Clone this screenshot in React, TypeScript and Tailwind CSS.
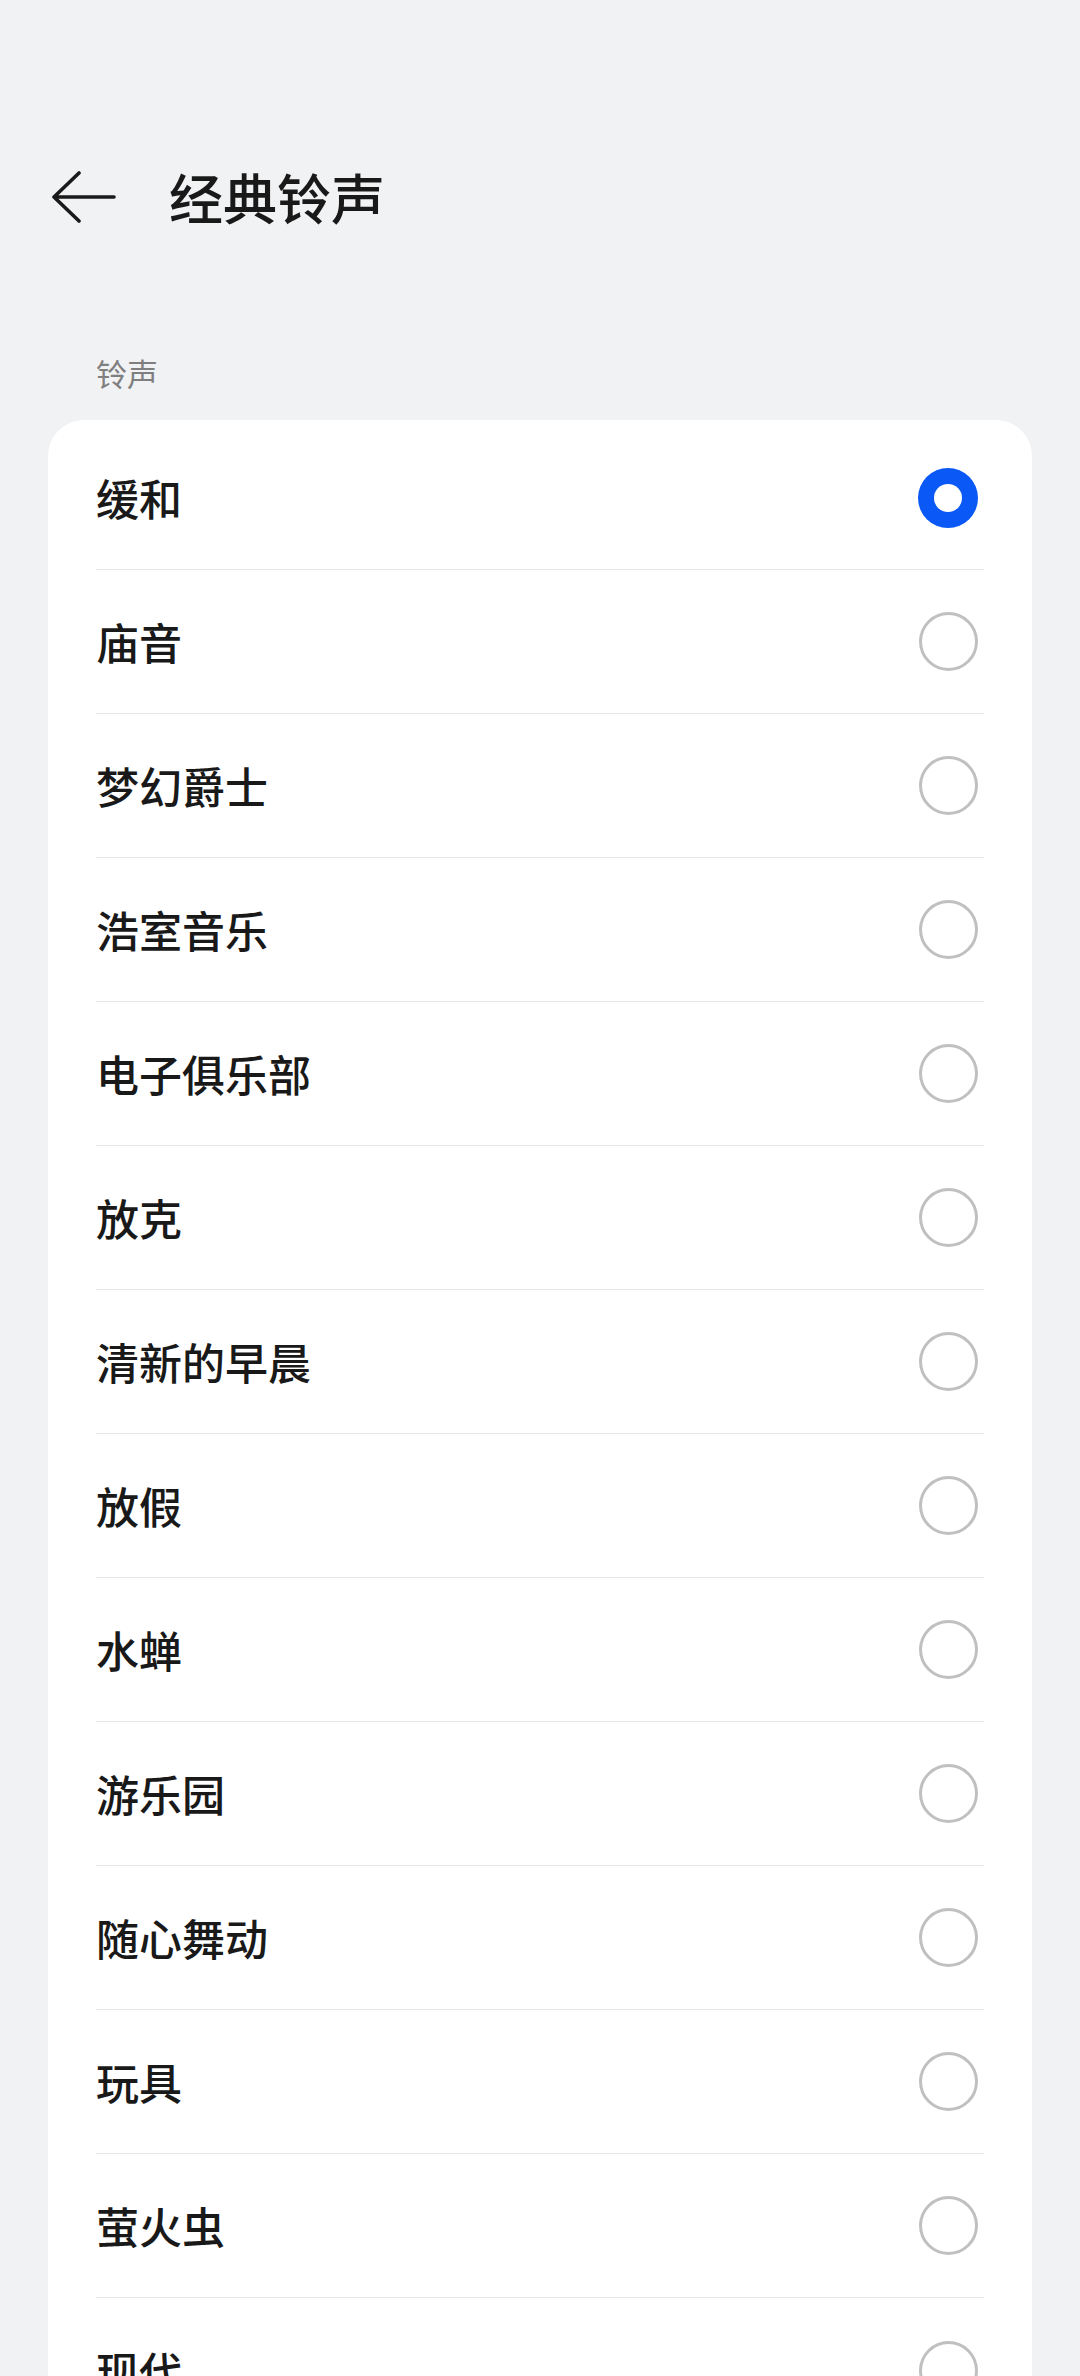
import React from "react";

const ringtones = [
  "缓和",
  "庙音",
  "梦幻爵士",
  "浩室音乐",
  "电子俱乐部",
  "放克",
  "清新的早晨",
  "放假",
  "水蝉",
  "游乐园",
  "随心舞动",
  "玩具",
  "萤火虫",
  "现代",
];

const Radio = ({ checked }: { checked: boolean }) =>
  checked ? (
    <div className="w-[60px] h-[60px] rounded-full bg-[#0a59f7] flex items-center justify-center">
      <div className="w-[28px] h-[28px] rounded-full bg-white" />
    </div>
  ) : (
    <div className="w-[59px] h-[59px] rounded-full border-[3.5px] border-[#c0c0c0]" />
  );

export default function App() {
  const selected = 0;
  return (
    <div
      className="w-[1080px] h-[2376px] overflow-hidden bg-[#f1f2f4] pt-[141px]"
      style={{ fontFamily: '"Noto Sans CJK SC", "Noto Sans", sans-serif' }}
    >
      {/* Header */}
      <div className="h-[112px] flex items-center">
        <button className="ml-[52px] w-[64px] h-[52px] flex items-center">
          <svg width="64" height="52" viewBox="0 0 64 52" fill="none">
            <path
              d="M27 2 L2 26 L27 50 M2 26 H62"
              stroke="#1a1a1a"
              strokeWidth="3.6"
              strokeLinecap="round"
              strokeLinejoin="round"
            />
          </svg>
        </button>
        <h1 className="ml-[53px] text-[54px] leading-none font-medium text-[#191919]">
          经典铃声
        </h1>
      </div>

      {/* Section label */}
      <div className="pt-[99px] pb-[26px] pl-[96px] text-[31px] leading-[42px] text-[#7f7f7f]">
        铃声
      </div>

      {/* List */}
      <div className="mx-[48px] bg-white rounded-[36px] pt-[6px]">
        {ringtones.map((name, i) => (
          <div key={name} className="px-[48px]">
            <div
              className={`h-[144px] flex items-center justify-between ${
                i < ringtones.length - 1 ? "border-b border-[#e6e6e6]" : ""
              }`}
            >
              <span className="text-[43px] leading-none font-medium text-[#191919]">
                {name}
              </span>
              <div className="w-[60px] flex items-center justify-center mr-[6px]">
                <Radio checked={i === selected} />
              </div>
            </div>
          </div>
        ))}
      </div>
    </div>
  );
}
